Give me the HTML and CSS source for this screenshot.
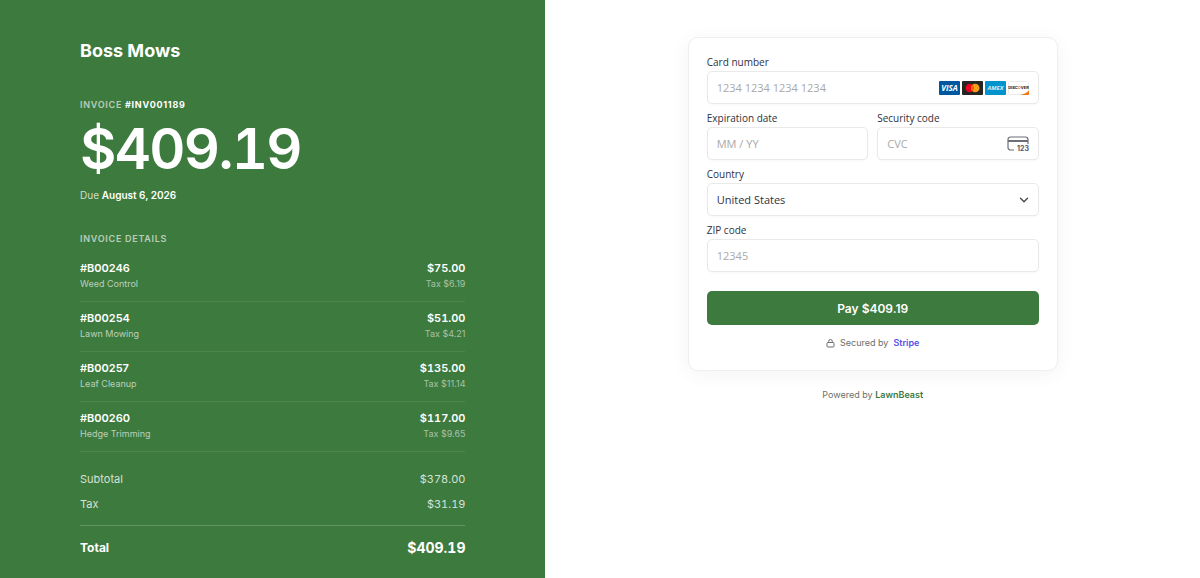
FILE: index.html
```html
<!DOCTYPE html>
<html lang="en">
<head>
    <meta charset="UTF-8">
    <meta name="viewport" content="width=device-width, initial-scale=1.0">
    <title>Boss Mows - Invoice #INV001189</title>
    <link rel="stylesheet" href="styles.css">
</head>
<body>

<div class="page">
    <section class="summary">
        <h1 class="brand">Boss Mows</h1>

        <div class="eyebrow">Invoice <strong>#INV001189</strong></div>
        <div class="amount">$409.19</div>
        <div class="due">Due <strong>August 6, 2026</strong></div>

        <h2 class="eyebrow details-title">Invoice Details</h2>
        <ul class="items">
            <li class="item">
                <div>
                    <div class="item-id">#B00246</div>
                    <div class="item-name">Weed Control</div>
                </div>
                <div class="item-right">
                    <div class="item-price">$75.00</div>
                    <div class="item-tax">Tax $6.19</div>
                </div>
            </li>
            <li class="item">
                <div>
                    <div class="item-id">#B00254</div>
                    <div class="item-name">Lawn Mowing</div>
                </div>
                <div class="item-right">
                    <div class="item-price">$51.00</div>
                    <div class="item-tax">Tax $4.21</div>
                </div>
            </li>
            <li class="item">
                <div>
                    <div class="item-id">#B00257</div>
                    <div class="item-name">Leaf Cleanup</div>
                </div>
                <div class="item-right">
                    <div class="item-price">$135.00</div>
                    <div class="item-tax">Tax $11.14</div>
                </div>
            </li>
            <li class="item">
                <div>
                    <div class="item-id">#B00260</div>
                    <div class="item-name">Hedge Trimming</div>
                </div>
                <div class="item-right">
                    <div class="item-price">$117.00</div>
                    <div class="item-tax">Tax $9.65</div>
                </div>
            </li>
        </ul>

        <div class="totals">
            <div class="total-row"><span>Subtotal</span><span>$378.00</span></div>
            <div class="total-row"><span>Tax</span><span>$31.19</span></div>
            <div class="total-row grand"><span>Total</span><span class="grand-amount">$409.19</span></div>
        </div>
    </section>

    <main class="payment">
        <form class="card" id="paymentForm">
            <div class="fields">
                <div class="field wide">
                    <label for="cardNumber">Card number</label>
                    <div class="control">
                        <input type="text" id="cardNumber" inputmode="numeric" placeholder="1234 1234 1234 1234">
                        <div class="brands">
                            <svg width="21" height="14" viewBox="0 0 21 14" role="img" aria-label="Visa">
                                <rect width="21" height="14" rx="1" fill="#00579f"/>
                                <text class="visa" x="10.5" y="10" text-anchor="middle">VISA</text>
                            </svg>
                            <svg width="21" height="14" viewBox="0 0 21 14" role="img" aria-label="Mastercard">
                                <rect width="21" height="14" rx="1" fill="#252525"/>
                                <circle cx="7.8" cy="7" r="4.3" fill="#eb001b"/>
                                <circle cx="13.2" cy="7" r="4.3" fill="#f79e1b"/>
                                <path d="M10.5 3.65a4.3 4.3 0 0 1 0 6.7a4.3 4.3 0 0 1 0-6.7z" fill="#ff5f00"/>
                            </svg>
                            <svg width="21" height="14" viewBox="0 0 21 14" role="img" aria-label="American Express">
                                <rect width="21" height="14" rx="1" fill="#0193ce"/>
                                <text class="amex" x="10.5" y="9" text-anchor="middle">AMEX</text>
                            </svg>
                            <svg width="21" height="14" viewBox="0 0 21 14" role="img" aria-label="Discover">
                                <rect x=".5" y=".5" width="20" height="13" rx="1" fill="#fff" stroke="#ececec"/>
                                <path d="M21 9.5V13a1 1 0 0 1-1 1h-8c4-.8 7-2.3 9-4.5z" fill="#f27712"/>
                                <text class="discover" x="10.5" y="8.3" text-anchor="middle">DISC<tspan fill="#f27712">O</tspan>VER</text>
                            </svg>
                        </div>
                    </div>
                </div>
                <div class="field">
                    <label for="expiry">Expiration date</label>
                    <div class="control">
                        <input type="text" id="expiry" inputmode="numeric" placeholder="MM / YY">
                    </div>
                </div>
                <div class="field">
                    <label for="cvc">Security code</label>
                    <div class="control">
                        <input type="text" id="cvc" inputmode="numeric" placeholder="CVC">
                        <svg width="22" height="16" viewBox="0 0 22 16" aria-hidden="true">
                            <path d="M7 14H3.5A2.5 2.5 0 0 1 1 11.5V3.5A2.5 2.5 0 0 1 3.5 1h15A2.5 2.5 0 0 1 21 3.5V8" fill="none" stroke="#6d6e78" stroke-width="1.2"/>
                            <path d="M1 5h20" stroke="#6d6e78" stroke-width="2"/>
                            <text class="cvc-digits" x="22" y="15" text-anchor="end">123</text>
                        </svg>
                    </div>
                </div>
                <div class="field wide">
                    <label for="country">Country</label>
                    <div class="control">
                        <select id="country">
                            <option>United States</option>
                            <option>Canada</option>
                        </select>
                        <svg class="chevron" width="10" height="10" viewBox="0 0 10 10" aria-hidden="true">
                            <path d="M1.5 3.2L5 6.7l3.5-3.5" fill="none" stroke="#4a4a4a" stroke-width="1.4" stroke-linecap="round" stroke-linejoin="round"/>
                        </svg>
                    </div>
                </div>
                <div class="field wide">
                    <label for="zip">ZIP code</label>
                    <div class="control">
                        <input type="text" id="zip" inputmode="numeric" placeholder="12345">
                    </div>
                </div>
            </div>
            <button type="submit" class="pay">Pay $409.19</button>
            <div class="secured">
                <svg width="9" height="10" viewBox="0 0 9 10" aria-hidden="true">
                    <rect x="1" y="4.5" width="7" height="4.5" rx=".8" fill="none" stroke="#6b6f6b"/>
                    <path d="M2.7 4.5V3.3a1.8 1.8 0 0 1 3.6 0v1.2" fill="none" stroke="#6b6f6b"/>
                </svg>
                <span>Secured by</span>
                <a href="#">Stripe</a>
            </div>
        </form>
        <div class="powered">Powered by <a href="#">LawnBeast</a></div>
    </main>
</div>

</body>
</html>
```

FILE: styles.css
```css
* {
    box-sizing: border-box;
}
body {
    margin: 0;
    font-family: Inter, "Liberation Sans", sans-serif;
    font-size: 11px;
    line-height: 16px;
    background-color: #fff;
}
a {
    text-decoration: none;
    font-weight: 600;
}
.page {
    display: grid;
    grid-template-columns: 1fr 1.2fr;
    min-height: 100vh;
}

/* left side */
.summary {
    background-color: #3d7a3e;
    color: #fff;
    padding: 41px 80px 20px;
}
.brand {
    margin: 0 0 38px;
    font-size: 18px;
    line-height: 20px;
    font-weight: 700;
}
.eyebrow {
    margin: 0;
    font-size: 9px;
    line-height: 12px;
    font-weight: 600;
    letter-spacing: 0.08em;
    text-transform: uppercase;
    color: rgba(255, 255, 255, 0.65);
}
.eyebrow strong {
    font-weight: 700;
    color: #fff;
}
.amount {
    margin: 10px 0;
    font-size: 56px;
    line-height: 56px;
    font-weight: 600;
    letter-spacing: -0.03em;
    font-variant-numeric: tabular-nums;
}
.due {
    font-size: 10px;
    color: rgba(255, 255, 255, 0.75);
}
.due strong {
    font-weight: 600;
    color: #fff;
}
.details-title {
    margin: 30px 0 7px;
}
.items {
    list-style: none;
    margin: 0;
    padding: 0;
}
.item {
    display: flex;
    justify-content: space-between;
    padding: 8px 0 9px;
    border-bottom: 1px solid rgba(255, 255, 255, 0.08);
}
.item-right {
    text-align: right;
}
.item-id {
    font-weight: 600;
}
.item-name {
    font-size: 9px;
    color: rgba(255, 255, 255, 0.65);
}
.item-price {
    font-weight: 600;
    font-variant-numeric: tabular-nums;
}
.item-tax {
    font-size: 9px;
    color: rgba(255, 255, 255, 0.55);
}
.totals {
    padding-top: 19px;
}
.total-row {
    display: flex;
    justify-content: space-between;
    margin-bottom: 9px;
    color: rgba(255, 255, 255, 0.8);
    font-variant-numeric: tabular-nums;
}
.grand {
    margin: 13px 0 0;
    padding-top: 12px;
    border-top: 1px solid rgba(255, 255, 255, 0.2);
    font-size: 12px;
    font-weight: 700;
    line-height: 20px;
    color: #fff;
}
.grand-amount {
    font-size: 14px;
}

/* right side */
.payment {
    display: flex;
    flex-direction: column;
    align-items: center;
    padding: 37px 20px 20px;
}
.card {
    width: 100%;
    max-width: 370px;
    padding: 17px 18px 19px;
    border: 1px solid #efefef;
    border-radius: 10px;
    background-color: #fff;
    box-shadow: 0 3px 20px rgba(0, 0, 0, 0.05);
}
.fields {
    display: grid;
    grid-template-columns: repeat(2, minmax(0, 1fr));
    gap: 7px 9px;
    font-family: "Open Sans", "Noto Sans", sans-serif;
    color: #30313d;
}
.wide {
    grid-column: 1 / -1;
}
.field label {
    display: block;
    margin-bottom: 2px;
    font-size: 10px;
    line-height: 14px;
}
.control {
    display: flex;
    align-items: center;
    height: 33px;
    padding: 0 9px;
    border: 1px solid #e9e9e9;
    border-radius: 5px;
    background-color: #fff;
    box-shadow: 0 1px 2px rgba(0, 0, 0, 0.03);
}
.control input,
.control select {
    flex: 1;
    min-width: 0;
    padding: 0;
    border: none;
    outline: none;
    background: none;
    appearance: none;
    font-family: inherit;
    font-size: 11px;
    color: #30313d;
}
.control input::placeholder {
    color: #a9a9a9;
}
.brands {
    display: flex;
    gap: 2px;
}
.chevron {
    pointer-events: none;
}
.visa {
    font: italic 700 8px "Open Sans", sans-serif;
    fill: #fff;
}
.amex {
    font: italic 700 6px "Open Sans", sans-serif;
    fill: #d5eef9;
}
.discover {
    font: 700 4px Inter, sans-serif;
    fill: #222;
}
.cvc-digits {
    font: 700 7px Inter, sans-serif;
    fill: #55565f;
}
.pay {
    display: block;
    width: 100%;
    height: 34px;
    margin-top: 19px;
    border: none;
    border-radius: 5px;
    background-color: #3d7a3e;
    color: #fff;
    font-family: inherit;
    font-size: 12px;
    font-weight: 600;
    cursor: pointer;
}
.secured {
    display: flex;
    justify-content: center;
    align-items: center;
    gap: 5px;
    margin-top: 10px;
    font-size: 9px;
    color: #6b6f6b;
}
.secured a {
    color: #5851ea;
}
.powered {
    margin-top: 16px;
    font-size: 9px;
    color: #6b6f6b;
}
.powered a {
    color: #3d7a3e;
}
```
